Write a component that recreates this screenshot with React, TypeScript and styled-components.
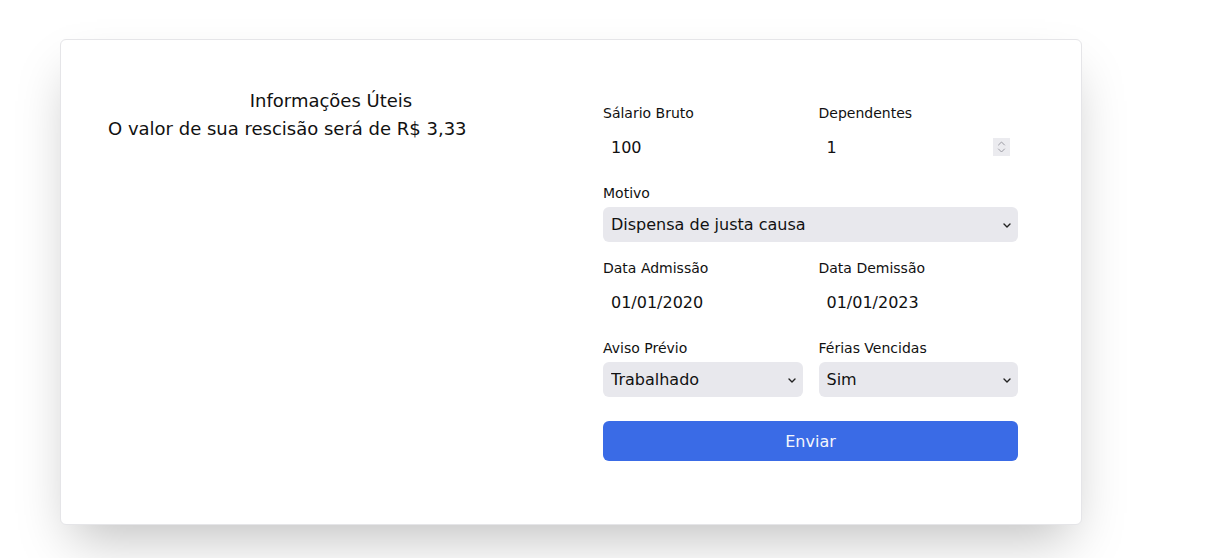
import React from "react";
import styled, { createGlobalStyle } from "styled-components";

const Global = createGlobalStyle`
  html, body { margin: 0; padding: 0; background: #ffffff; }
  body { font-family: "DejaVu Sans", "Noto Sans", sans-serif; color: #111111; }
  * { box-sizing: border-box; }
`;

const Page = styled.div`
  padding: 39px 0 40px 60px;
`;

const Card = styled.div`
  width: 1022px;
  height: 486px;
  background: #ffffff;
  border: 1px solid #e5e5e8;
  border-radius: 6px;
  box-shadow: 0 25px 50px -12px rgba(0, 0, 0, 0.25);
  display: flex;
  padding: 0 63px 0 47px;
  gap: 49px;
`;

const InfoColumn = styled.div`
  width: 446px;
  padding-top: 47px;
`;

const Title = styled.h2`
  margin: 0;
  font-size: 18px;
  line-height: 28px;
  font-weight: 400;
  text-align: center;
`;

const Result = styled.p`
  margin: 0;
  font-size: 18px;
  line-height: 28px;
`;

const FormColumn = styled.form`
  flex: 1;
  display: flex;
  flex-direction: column;
  justify-content: center;
`;

const Grid = styled.div`
  display: grid;
  grid-template-columns: 1fr 1fr;
  column-gap: 16px;
  row-gap: 16px;
`;

const Field = styled.div<{ $full?: boolean }>`
  display: flex;
  flex-direction: column;
  gap: 4px;
  grid-column: ${(p) => (p.$full ? "1 / span 2" : "auto")};
`;

const Label = styled.label`
  font-size: 14px;
  line-height: 20px;
`;

const Input = styled.input`
  height: 40px;
  border: none;
  outline: none;
  background: transparent;
  padding: 8px 28px 8px 8px;
  font-family: inherit;
  font-size: 16px;
  line-height: 24px;
  color: #111111;
  width: 100%;
  -moz-appearance: textfield;

  &::-webkit-inner-spin-button,
  &::-webkit-outer-spin-button {
    -webkit-appearance: none;
    margin: 0;
  }
`;

const ControlWrap = styled.div`
  position: relative;
  width: 100%;
`;

const Spinner = styled.svg`
  position: absolute;
  right: 8px;
  top: 11px;
  width: 17px;
  height: 18px;
  background: #ebebef;
  pointer-events: none;
`;

const Select = styled.select`
  appearance: none;
  -webkit-appearance: none;
  display: block;
  height: 35px;
  border: none;
  outline: none;
  background-color: #e8e8ed;
  border-radius: 6px;
  padding: 0 24px 0 8px;
  font-family: inherit;
  font-size: 16px;
  color: #111111;
  width: 100%;
`;

const Chevron = styled.svg`
  position: absolute;
  right: 7px;
  top: 50%;
  width: 8px;
  height: 5px;
  margin-top: -2px;
  pointer-events: none;
`;

const Button = styled.button`
  margin-top: 24px;
  height: 40px;
  width: 100%;
  border: none;
  border-radius: 6px;
  background: #3a6be6;
  color: #f4f6fc;
  font-family: inherit;
  font-size: 16px;
`;

function DropDown({ value, options }: { value: string; options: string[] }) {
  return (
    <ControlWrap>
      <Select defaultValue={value}>
        {options.map((o) => (
          <option key={o} value={o}>
            {o}
          </option>
        ))}
      </Select>
      <Chevron viewBox="0 0 8 5">
        <path d="M1 1 L4 4 L7 1" fill="none" stroke="#222" strokeWidth="1.4" strokeLinecap="round" strokeLinejoin="round" />
      </Chevron>
    </ControlWrap>
  );
}

function NumberField({ value }: { value: string }) {
  return (
    <ControlWrap>
      <Input type="number" defaultValue={value} />
      <Spinner viewBox="0 0 17 18">
        <path d="M5.5 7 L8.5 4 L11.5 7" fill="none" stroke="#9a9aa2" strokeWidth="1" strokeLinecap="round" strokeLinejoin="round" />
        <path d="M5.5 11 L8.5 14 L11.5 11" fill="none" stroke="#9a9aa2" strokeWidth="1" strokeLinecap="round" strokeLinejoin="round" />
      </Spinner>
    </ControlWrap>
  );
}

export default function App() {
  return (
    <>
      <Global />
      <Page>
        <Card>
          <InfoColumn>
            <Title>Informações Úteis</Title>
            <Result>O valor de sua rescisão será de R$ 3,33</Result>
          </InfoColumn>
          <FormColumn onSubmit={(e) => e.preventDefault()}>
            <Grid>
              <Field>
                <Label>Sálario Bruto</Label>
                <Input type="text" defaultValue="100" />
              </Field>
              <Field>
                <Label>Dependentes</Label>
                <NumberField value="1" />
              </Field>
              <Field $full>
                <Label>Motivo</Label>
                <DropDown
                  value="Dispensa de justa causa"
                  options={["Dispensa de justa causa", "Dispensa sem justa causa", "Pedido de demissão"]}
                />
              </Field>
              <Field>
                <Label>Data Admissão</Label>
                <Input type="text" defaultValue="01/01/2020" />
              </Field>
              <Field>
                <Label>Data Demissão</Label>
                <Input type="text" defaultValue="01/01/2023" />
              </Field>
              <Field>
                <Label>Aviso Prévio</Label>
                <DropDown value="Trabalhado" options={["Trabalhado", "Indenizado"]} />
              </Field>
              <Field>
                <Label>Férias Vencidas</Label>
                <DropDown value="Sim" options={["Sim", "Não"]} />
              </Field>
            </Grid>
            <Button type="submit">Enviar</Button>
          </FormColumn>
        </Card>
      </Page>
    </>
  );
}
